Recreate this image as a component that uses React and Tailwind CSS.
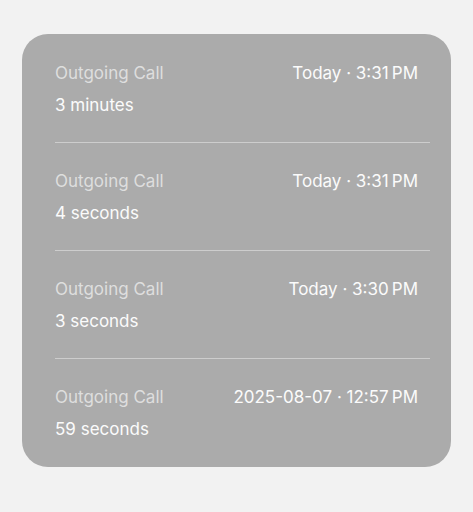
const calls = [
  { label: "Outgoing Call", duration: "3 minutes", when: "Today · 3:31\u2009PM" },
  { label: "Outgoing Call", duration: "4 seconds", when: "Today · 3:31\u2009PM" },
  { label: "Outgoing Call", duration: "3 seconds", when: "Today · 3:30\u2009PM" },
  { label: "Outgoing Call", duration: "59 seconds", when: "2025-08-07 · 12:57\u2009PM" },
];

export default function App() {
  return (
    <div className="min-h-[512px] w-full bg-[#f2f2f2] pt-[34px] pl-[22px] pr-[22px] font-['Inter','Liberation_Sans',sans-serif]">
      <div className="w-[429px] rounded-[26px] bg-[#ababab] pt-[1px] pb-[1px] pl-[33px] pr-[21px]">
        {calls.map((c, i) => (
          <div key={i} className={i < calls.length - 1 ? "border-b border-[#cdcdcd]" : ""}>
            <div className="pt-[27px] pb-[26px] pr-[12px]">
              <div className="flex items-center justify-between text-[17px] leading-[22px]">
                <span className="text-[#dedede]">{c.label}</span>
                <span className="text-[#fbfbfb]">{c.when}</span>
              </div>
              <div className="mt-[10px] text-[17px] leading-[22px] text-[#fbfbfb]">{c.duration}</div>
            </div>
          </div>
        ))}
      </div>
    </div>
  );
}
